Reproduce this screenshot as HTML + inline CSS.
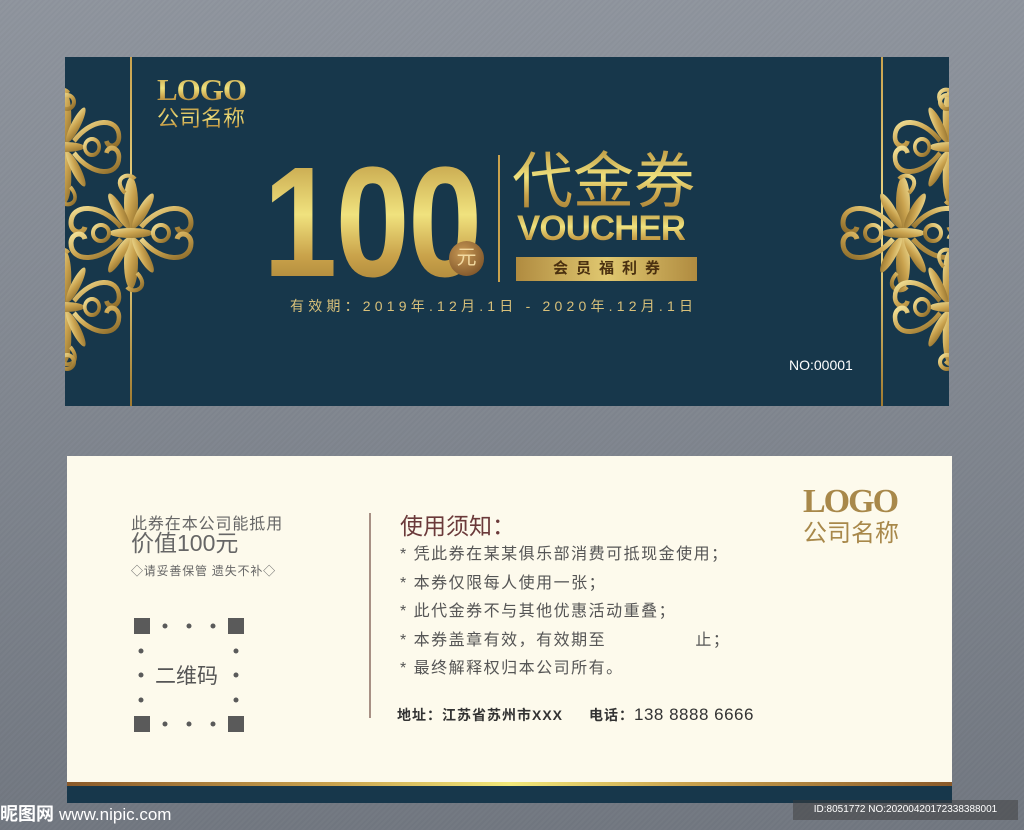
<!DOCTYPE html>
<html><head><meta charset="utf-8"><style>
*{margin:0;padding:0;box-sizing:border-box}
body{width:1024px;height:830px;overflow:hidden;position:relative;font-family:"Liberation Sans","Noto Sans CJK SC",sans-serif;
background:repeating-linear-gradient(135deg,#8a8f98 0 2px,#7d828b 2px 4px);}
.bg{position:absolute;inset:0;background:linear-gradient(180deg,#9298a1 0%,#7f858e 50%,#6c727b 100%);opacity:.75}
.a{position:absolute;white-space:nowrap}
.gold{background:linear-gradient(180deg,#b8913c 0%,#f0e27e 45%,#c9a24a 70%,#9a7530 100%);-webkit-background-clip:text;background-clip:text;color:transparent}
</style></head><body>
<div class="bg"></div>
<div class="a" style="left:65px;top:57px;width:884px;height:349px;background:#17374b;overflow:hidden">
<svg width="884" height="349" style="position:absolute;left:0;top:0">
<defs>
<linearGradient id="g" x1="0" y1="0" x2="1" y2="1"><stop offset="0" stop-color="#f3e39a"/><stop offset=".5" stop-color="#c9a24e"/><stop offset="1" stop-color="#8a6a2a"/></linearGradient>
<linearGradient id="vl" x1="0" y1="0" x2="0" y2="1"><stop offset="0" stop-color="#c9a24e"/><stop offset=".5" stop-color="#f0dc8a"/><stop offset="1" stop-color="#a07a30"/></linearGradient>
<g id="orn" fill="url(#g)" stroke="url(#g)">
<ellipse cx="0" cy="-30" rx="7" ry="26" stroke="none"/>
<ellipse cx="0" cy="30" rx="7" ry="26" stroke="none"/>
<ellipse cx="-12" cy="-22" rx="5" ry="20" transform="rotate(-30 -12 -22)" stroke="none"/>
<ellipse cx="12" cy="-22" rx="5" ry="20" transform="rotate(30 12 -22)" stroke="none"/>
<ellipse cx="-12" cy="22" rx="5" ry="20" transform="rotate(30 -12 22)" stroke="none"/>
<ellipse cx="12" cy="22" rx="5" ry="20" transform="rotate(-30 12 22)" stroke="none"/>
<ellipse cx="0" cy="0" rx="22" ry="5" stroke="none"/>
<path d="M-10 -6 C-30 -30 -60 -30 -60 -10 C-60 0 -48 2 -46 -6" fill="none" stroke-width="5"/>
<path d="M10 -6 C30 -30 60 -30 60 -10 C60 0 48 2 46 -6" fill="none" stroke-width="5"/>
<path d="M-10 6 C-30 30 -60 30 -60 10 C-60 0 -48 -2 -46 6" fill="none" stroke-width="5"/>
<path d="M10 6 C30 30 60 30 60 10 C60 0 48 -2 46 6" fill="none" stroke-width="5"/>
<path d="M-6 -40 C-20 -55 -2 -62 4 -54" fill="none" stroke-width="4"/>
<path d="M6 40 C20 55 2 62 -4 54" fill="none" stroke-width="4"/>
<circle cx="-30" cy="0" r="8" fill="none" stroke-width="4"/>
<circle cx="30" cy="0" r="8" fill="none" stroke-width="4"/>
</g>
</defs>
<rect x="65" y="0" width="2" height="349" fill="url(#vl)"/>
<rect x="816" y="0" width="2" height="349" fill="url(#vl)"/>
<use href="#orn" transform="translate(66 176)"/>
<use href="#orn" transform="translate(838 176) scale(-1 1)"/>
<use href="#orn" transform="translate(0 90) scale(.9 1)"/>
<use href="#orn" transform="translate(0 250) scale(.9 1)"/>
<use href="#orn" transform="translate(884 90) scale(.9 1)"/>
<use href="#orn" transform="translate(884 250) scale(.9 1)"/>
<circle cx="2" cy="45" r="7" fill="none" stroke="url(#g)" stroke-width="4"/>
<circle cx="2" cy="305" r="7" fill="none" stroke="url(#g)" stroke-width="4"/>
<circle cx="882" cy="45" r="7" fill="none" stroke="url(#g)" stroke-width="4"/>
<circle cx="882" cy="305" r="7" fill="none" stroke="url(#g)" stroke-width="4"/>
</svg>
</div>
<div class="a gold" style="left:157px;top:72px;font:bold 31px/36px 'Liberation Serif',serif;letter-spacing:-1px">LOGO</div>
<div class="a gold" style="left:157px;top:106px;font-size:22px;line-height:26px">公司名称</div>
<div class="a gold" style="left:263px;top:140px;font:bold 157px/166px 'Liberation Sans',sans-serif;letter-spacing:-2px;transform:scaleX(.85);transform-origin:left top">100</div>
<div class="a" style="left:449px;top:241px;width:35px;height:35px;border-radius:50%;background:radial-gradient(circle at 40% 35%,#c99a55,#6e4520);color:#f2d9a0;font-size:20px;line-height:35px;text-align:center">元</div>
<div class="a" style="left:498px;top:155px;width:2px;height:127px;background:#c9a24e"></div>
<div class="a gold" style="left:512px;top:145px;font-size:61px;line-height:72px">代金券</div>
<div class="a gold" style="left:517px;top:207px;font:bold 35px/44px 'Liberation Sans',sans-serif;letter-spacing:-1px">VOUCHER</div>
<div class="a" style="left:516px;top:257px;width:181px;height:24px;background:linear-gradient(90deg,#b08b40,#e0c870,#b08b40);color:#4a3010;font-size:15px;font-weight:bold;line-height:24px;text-align:center;letter-spacing:8px;padding-left:8px">会员福利券</div>
<div class="a" style="left:290px;top:296px;color:#d8c07a;font-size:14px;letter-spacing:4.2px">有效期：2019年.12月.1日 - 2020年.12月.1日</div>
<div class="a" style="left:789px;top:357px;color:#fff;font-size:14px">NO:00001</div>
<div class="a" style="left:67px;top:456px;width:885px;height:347px;background:#fdfaec">
<div class="a" style="left:0;top:326px;width:885px;height:4px;background:linear-gradient(90deg,#8a5a2a,#c9a24e 30%,#f2e87a 50%,#c9a24e 70%,#8a5a2a)"></div>
<div class="a" style="left:0;top:330px;width:885px;height:17px;background:#17374b"></div>
</div>
<div class="a" style="left:131px;top:510px;color:#666;font-size:16px;letter-spacing:.9px">此券在本公司能抵用</div>
<div class="a" style="left:131px;top:529px;color:#666;font-size:23px;line-height:29px">价值100元</div>
<div class="a" style="left:131px;top:562px;color:#666;font-size:12px;letter-spacing:.8px">◇请妥善保管 遗失不补◇</div>
<svg class="a" style="left:130px;top:614px" width="120" height="124" fill="#5a5a5a">
<rect x="4" y="4" width="16" height="16"/><rect x="98" y="4" width="16" height="16"/>
<rect x="4" y="102" width="16" height="16"/><rect x="98" y="102" width="16" height="16"/>
<circle cx="35" cy="12" r="2.5"/><circle cx="59" cy="12" r="2.5"/><circle cx="83" cy="12" r="2.5"/>
<circle cx="35" cy="110" r="2.5"/><circle cx="59" cy="110" r="2.5"/><circle cx="83" cy="110" r="2.5"/>
<circle cx="11" cy="37" r="2.5"/><circle cx="11" cy="61" r="2.5"/><circle cx="11" cy="86" r="2.5"/>
<circle cx="106" cy="37" r="2.5"/><circle cx="106" cy="61" r="2.5"/><circle cx="106" cy="86" r="2.5"/>
</svg>
<div class="a" style="left:155px;top:660px;color:#555;font-size:21px">二维码</div>
<div class="a" style="left:369px;top:513px;width:2px;height:205px;background:#a89085"></div>
<div class="a" style="left:400px;top:507px;color:#6b3a3a;font-size:23px">使用须知：</div>
<div class="a" style="left:400px;top:541px;color:#555;font-size:16px;letter-spacing:1.5px;line-height:28.5px;white-space:pre">* 凭此券在某某俱乐部消费可抵现金使用；
* 本券仅限每人使用一张；
* 此代金券不与其他优惠活动重叠；
* 本券盖章有效，有效期至               止；
* 最终解释权归本公司所有。</div>
<div class="a" style="left:397px;top:705px;color:#333;font-size:14px;font-weight:bold;letter-spacing:1px">地址：江苏省苏州市XXX<span style="margin-left:26px">电话：</span><span style="font-size:17px;font-weight:normal;letter-spacing:.5px">138 8888 6666</span></div>
<div class="a" style="left:803px;top:483px;color:#a8884a;font:bold 34px 'Liberation Serif',serif;letter-spacing:-2px">LOGO</div>
<div class="a" style="left:803px;top:520px;color:#a8884a;font-size:24px;line-height:28px">公司名称</div>
<div class="a" style="left:0;top:800px;color:#fff;font-size:18px;font-weight:bold">昵图网 <span style="font-weight:normal;font-size:17px">www.nipic.com</span></div>
<div class="a" style="left:793px;top:800px;width:225px;height:20px;background:rgba(60,60,60,.5);color:#fff;font-size:10px;line-height:20px;text-align:center">ID:8051772 NO:20200420172338388001</div>
</body></html>
